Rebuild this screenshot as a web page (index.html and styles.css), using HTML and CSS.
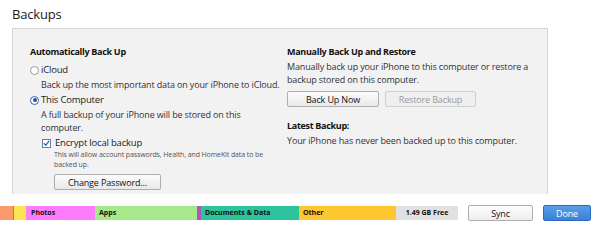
FILE: index.html
```html
<!DOCTYPE html>
<html>
<head>
<meta charset="utf-8">
<link rel="stylesheet" href="styles.css">
</head>
<body>
<h1 class="title">Backups</h1>
<section class="panel">
  <div class="col">
    <div class="heading">Automatically Back Up</div>
    <div class="option first"><span class="radio"></span>iCloud</div>
    <div class="desc">Back up the most important data on your iPhone to iCloud.</div>
    <div class="option second"><span class="radio on"></span>This Computer</div>
    <div class="desc">A full backup of your iPhone will be stored on this<br>computer.</div>
    <div class="check-row"><span class="checkbox"><svg width="9" height="9" viewBox="0 0 9 9"><path d="M1.6 4.6 L3.6 6.8 L7.6 1.6" fill="none" stroke="#2a5fb0" stroke-width="1.6" stroke-linecap="round" stroke-linejoin="round"/></svg></span>Encrypt local backup</div>
    <div class="small">This will allow account passwords, Health, and HomeKit data to be<br>backed up.</div>
    <button class="btn change">Change Password...</button>
  </div>
  <div class="col">
    <div class="heading">Manually Back Up and Restore</div>
    <div class="text">Manually back up your iPhone to this computer or restore a<br>backup stored on this computer.</div>
    <div class="btn-row">
      <button class="btn backup">Back Up Now</button>
      <button class="btn restore" disabled>Restore Backup</button>
    </div>
    <div class="heading latest">Latest Backup:</div>
    <div class="text">Your iPhone has never been backed up to this computer.</div>
  </div>
</section>
<footer class="footer">
  <div class="storage">
    <span class="seg s-orange"></span>
    <span class="seg s-yellow"></span>
    <span class="seg s-pink">Photos</span>
    <span class="seg s-green">Apps</span>
    <span class="seg s-purple"></span>
    <span class="seg s-teal">Documents &amp; Data</span>
    <span class="seg s-other">Other</span>
    <span class="seg s-free">1.49 GB Free</span>
  </div>
  <button class="btn sync">Sync</button>
  <button class="btn done">Done</button>
</footer>
</body>
</html>
```

FILE: styles.css
```css
* { box-sizing: border-box; }
html, body { margin: 0; padding: 0; }
body {
  width: 600px;
  height: 228px;
  background: #ffffff;
  font-family: "Open Sans", "Noto Sans", sans-serif;
  color: #222;
  overflow: hidden;
}
.title {
  margin: 0;
  height: 28px;
  padding: 5px 0 0 12px;
  font-size: 13px;
  letter-spacing: -0.2px;
  line-height: 18px;
  font-weight: 400;
  color: #1a1a1a;
}
.panel {
  margin-left: 12px;
  width: 536px;
  height: 166px;
  border: 1px solid #d2d2d2;
  border-bottom: none;
  background: #f2f2f2;
  display: grid;
  grid-template-columns: 257px 1fr;
  padding: 16px 0 0 17px;
  white-space: nowrap;
}
.col { display: flex; flex-direction: column; align-items: flex-start; }
.heading {
  font-size: 9px;
  letter-spacing: -0.3px;
  font-weight: 700;
  line-height: 14px;
  color: #111;
}
.option {
  display: flex;
  align-items: center;
  font-size: 9.5px;
  letter-spacing: -0.2px;
  line-height: 14px;
  color: #222;
}
.option.first { margin-top: 4px; }
.option.second { margin-top: 2px; }
.radio {
  width: 9px;
  height: 9px;
  border-radius: 50%;
  border: 1px solid #9a9a9a;
  background: #fff;
  margin-right: 2px;
  position: relative;
}
.radio.on { border-color: #2f64b4; }
.radio.on::after {
  content: "";
  position: absolute;
  left: 1.5px; top: 1.5px;
  width: 4px; height: 4px;
  border-radius: 50%;
  background: #1f4f9c;
}
.desc {
  margin-top: 1px;
  padding-left: 11px;
  font-size: 9px;
  letter-spacing: -0.15px;
  line-height: 13px;
  color: #333;
}
.check-row {
  margin-top: 2px;
  padding-left: 12px;
  display: flex;
  align-items: center;
  font-size: 9.5px;
  letter-spacing: -0.2px;
  line-height: 14px;
  color: #222;
}
.checkbox {
  width: 9px;
  height: 9px;
  border: 1px solid #6d7f99;
  background: #fff;
  margin-right: 4px;
  display: flex;
  align-items: center;
  justify-content: center;
}
.checkbox svg { display: block; }
.small {
  padding-left: 24px;
  font-size: 7px;
  letter-spacing: -0.1px;
  line-height: 10px;
  color: #555;
}
.btn {
  font-family: inherit;
  font-size: 9px;
  letter-spacing: -0.15px;
  line-height: 13px;
  height: 16px;
  padding: 0;
  border: 1px solid #adadad;
  border-radius: 2px;
  background: linear-gradient(#fcfcfc, #e9e9e9);
  color: #111;
  white-space: nowrap;
}
.change {
  margin: 4px 0 0 24px;
  width: 107px;
}
.text {
  margin-top: 1px;
  font-size: 9px;
  letter-spacing: -0.15px;
  line-height: 13px;
  color: #333;
}
.btn-row {
  margin-top: 5px;
  display: flex;
  gap: 6px;
}
.backup { width: 92px; }
.restore {
  width: 91px;
  color: #9a9a9a;
  border-color: #d0d0d0;
  background: #efefef;
}
.latest { margin-top: 12px; }
.footer {
  margin-top: 11px;
  height: 16px;
  display: flex;
  align-items: center;
}
.storage {
  display: flex;
  height: 14px;
  width: 458px;
}
.seg {
  height: 14px;
  font-size: 7px;
  font-weight: 700;
  line-height: 14px;
  color: #111;
  padding-left: 4px;
  white-space: nowrap;
  overflow: hidden;
}
.s-orange { width: 14px; background: #fd9a6d; border-right: 1px solid #c77a55; padding: 0; }
.s-yellow { width: 12px; background: #fde54f; padding: 0; }
.s-pink { width: 69px; background: #fd7bfd; padding-left: 5px; }
.s-green { width: 102px; background: #a7e98a; }
.s-purple { width: 4px; background: #ad58b5; padding: 0; }
.s-teal { width: 98px; background: #2cc39d; }
.s-other { width: 97px; background: #fec72f; }
.s-free { width: 62px; background: #e1e1e1; text-align: center; padding: 0; }
.sync {
  margin-left: 10px;
  width: 65px;
  background: linear-gradient(#ffffff, #ededed);
}
.done {
  margin-left: 10px;
  width: 48px;
  color: #fff;
  border-color: #2c6cc0;
  background: linear-gradient(#5a9de8, #3a82d8);
}
```
